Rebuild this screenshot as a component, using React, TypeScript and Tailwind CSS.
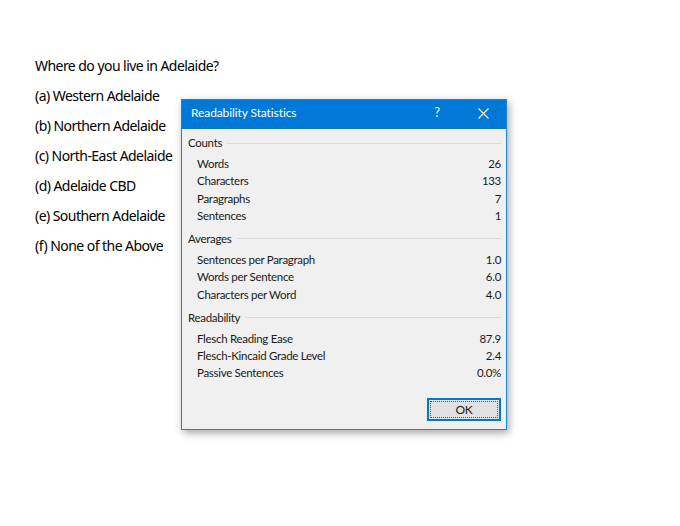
import React from 'react';

const options = [
    '(a) Western Adelaide',
    '(b) Northern Adelaide',
    '(c) North-East Adelaide',
    '(d) Adelaide CBD',
    '(e) Southern Adelaide',
    '(f) None of the Above',
];

const sections: { title: string; rows: [string, string][] }[] = [
    {
        title: 'Counts',
        rows: [
            ['Words', '26'],
            ['Characters', '133'],
            ['Paragraphs', '7'],
            ['Sentences', '1'],
        ],
    },
    {
        title: 'Averages',
        rows: [
            ['Sentences per Paragraph', '1.0'],
            ['Words per Sentence', '6.0'],
            ['Characters per Word', '4.0'],
        ],
    },
    {
        title: 'Readability',
        rows: [
            ['Flesch Reading Ease', '87.9'],
            ['Flesch-Kincaid Grade Level', '2.4'],
            ['Passive Sentences', '0.0%'],
        ],
    },
];

function Section({ title, rows }: { title: string; rows: [string, string][] }) {
    return (
        <div className="flex flex-col">
            <div className="flex items-center gap-[5px] h-[17px]">
                <span>{title}</span>
                <div className="flex-1 h-px bg-[#dcdcdc]" />
            </div>
            <div className="flex flex-col pl-[9px] pt-[3.5px]">
                {rows.map(([label, value]) => (
                    <div key={label} className="flex justify-between h-[17.4px] items-center">
                        <span>{label}</span>
                        <span>{value}</span>
                    </div>
                ))}
            </div>
        </div>
    );
}

export default function App() {
    return (
        <div className="relative w-[680px] h-[526px] bg-white overflow-hidden">
            <div
                className="flex flex-col gap-[12.4px] pl-[35px] pt-[57px] text-[14px] text-black leading-[17.6px]"
                style={{ fontFamily: '"Noto Sans", sans-serif', letterSpacing: '-0.55px' }}
            >
                <div>Where do you live in Adelaide?</div>
                {options.map((o) => (
                    <div key={o}>{o}</div>
                ))}
            </div>

            <div
                className="absolute left-[181px] top-[99px] w-[326px] h-[331px] bg-[#f0f0f0] border border-[#1883d7] shadow-[2px_3px_8px_rgba(0,0,0,0.35)] flex flex-col text-[11.5px] text-[#1a1a1a]"
                style={{ fontFamily: 'Lato, sans-serif', letterSpacing: '-0.3px' }}
            >
                <div className="h-[29px] bg-[#0078d7] text-white flex items-center shrink-0 pb-[3px]">
                    <span className="pl-[9px] text-[12px] flex-1" style={{ letterSpacing: '-0.1px' }}>Readability Statistics</span>
                    <span className="w-[46px] text-center text-[13px]">?</span>
                    <span className="w-[46px] flex justify-center items-center">
                        <svg width="11" height="11" viewBox="0 0 11 11">
                            <path d="M0.5 0.5 L10.5 10.5 M10.5 0.5 L0.5 10.5" stroke="white" strokeWidth="1.1" />
                        </svg>
                    </span>
                </div>
                <div className="flex flex-col gap-[5.9px] pl-[6px] pr-[5px] pt-[5.5px]">
                    {sections.map((s) => (
                        <Section key={s.title} title={s.title} rows={s.rows} />
                    ))}
                </div>
                <div className="flex justify-end pr-[5px] mt-auto mb-[8px]">
                    <div className="w-[74px] h-[23px] border-2 border-[#0078d7] bg-[#e1e1e1] p-px">
                        <div className="w-full h-full border border-dotted border-[#555] flex items-center justify-center text-[12px]">
                            OK
                        </div>
                    </div>
                </div>
            </div>
        </div>
    );
}
